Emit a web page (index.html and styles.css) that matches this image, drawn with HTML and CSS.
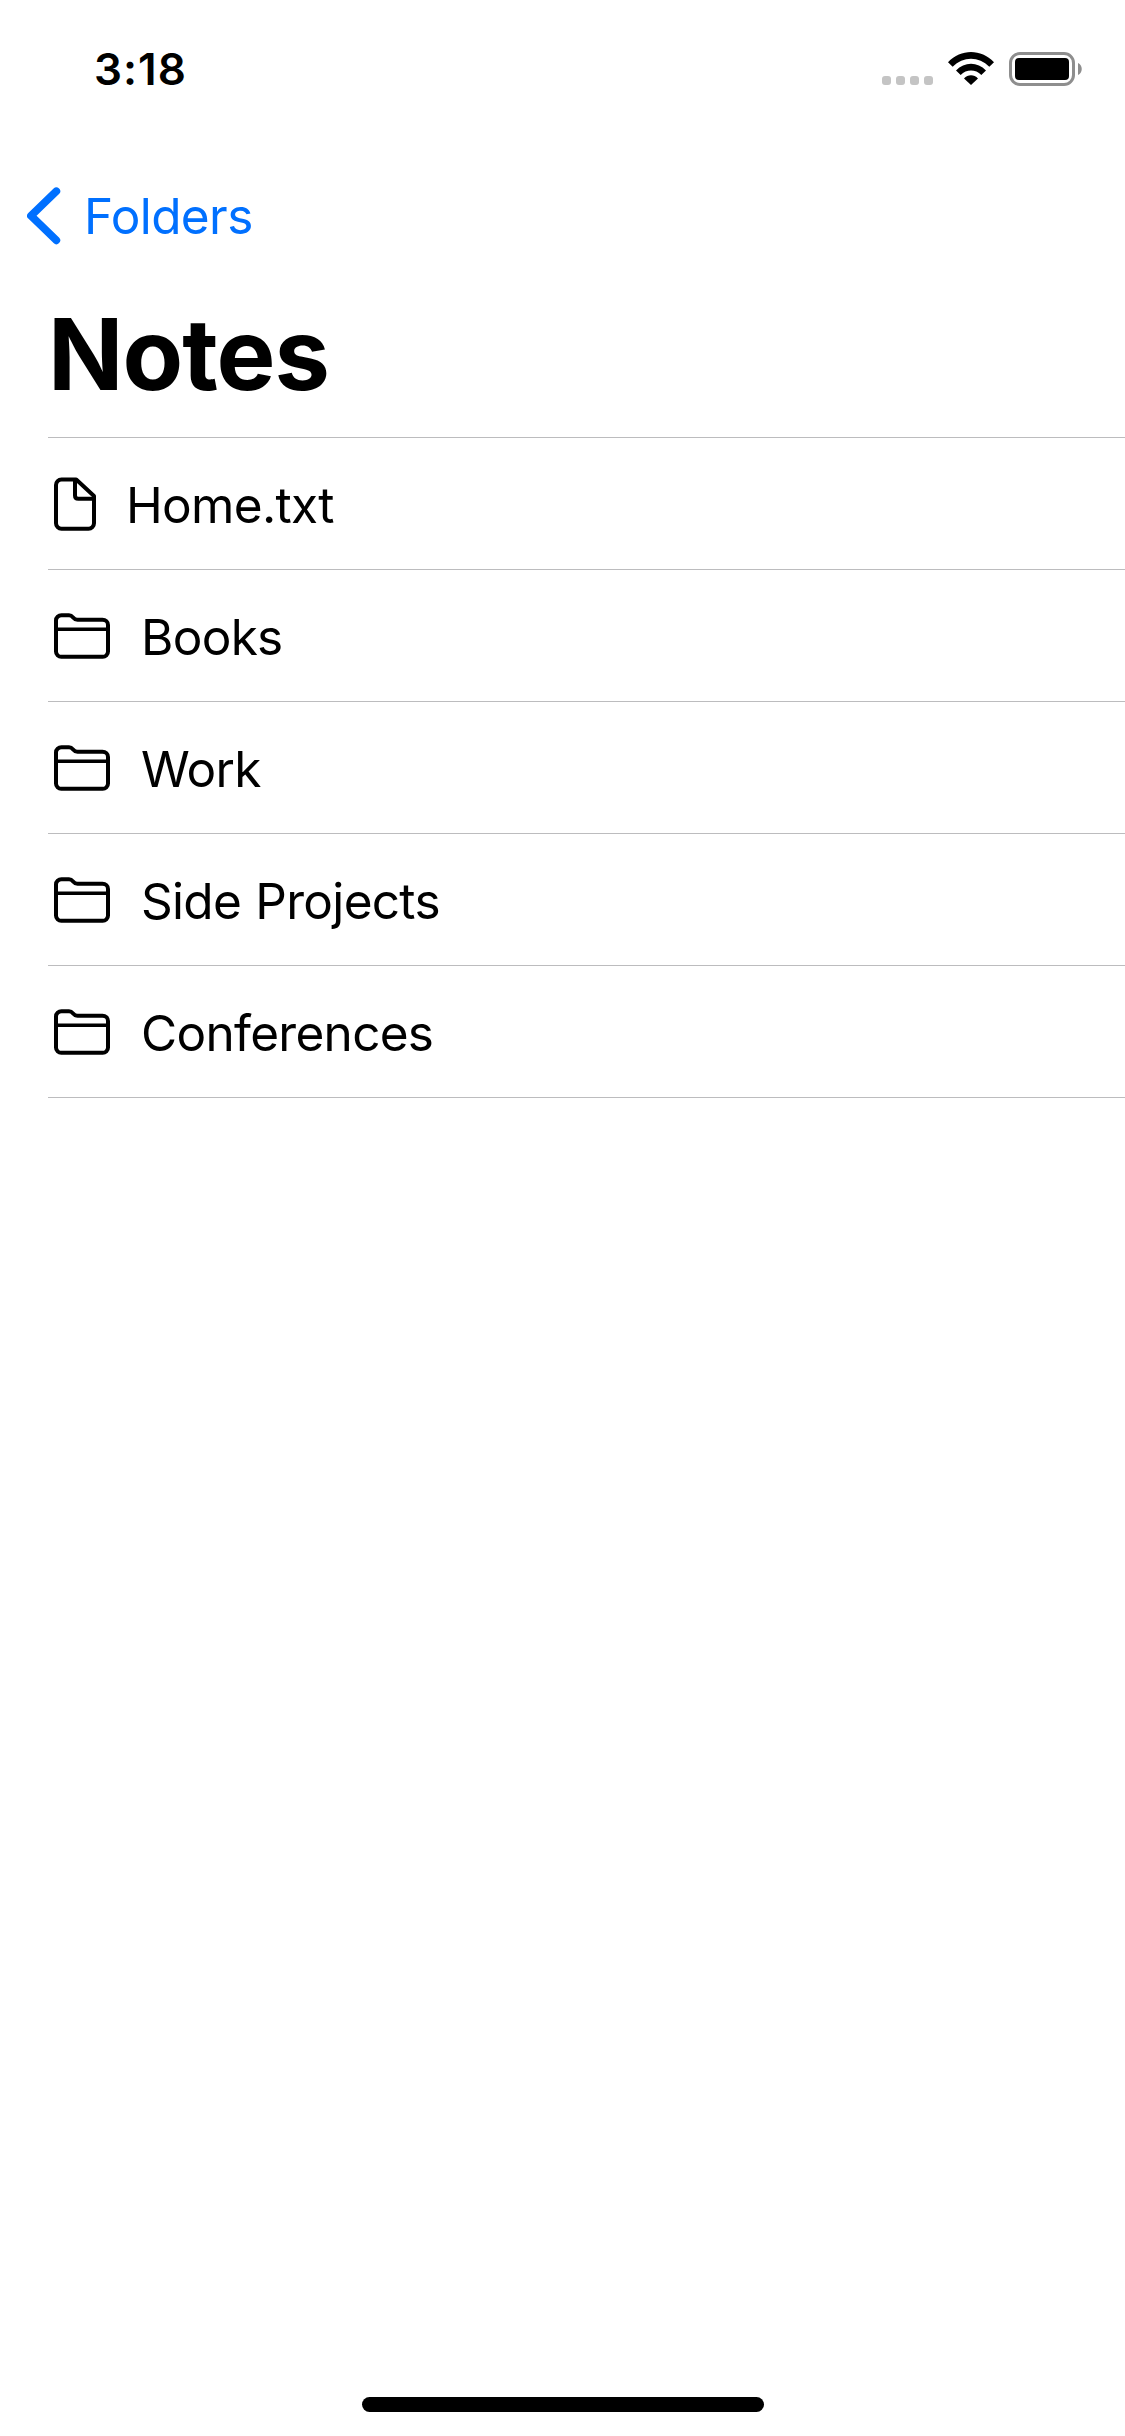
FILE: index.html
```html
<!DOCTYPE html>
<html lang="en">
<head>
<meta charset="utf-8">
<title>Notes</title>
<link rel="stylesheet" href="styles.css">
</head>
<body>
<svg class="sprite" aria-hidden="true">
  <symbol id="folder" viewBox="0 0 56 46">
    <g fill="none" stroke="currentColor" stroke-width="4">
      <path d="M2 7.5A5.5 5.2 0 0 1 7.5 2.3H15C19.6 2.3 18.6 6.8 23.5 6.8H48.5A5.5 5.2 0 0 1 54 12V38.5A5.3 5.3 0 0 1 48.5 43.8H7.5A5.3 5.3 0 0 1 2 38.5Z"/>
      <path stroke-width="3.6" d="M2 16.2H54"/>
    </g>
  </symbol>
  <symbol id="file" viewBox="0 0 42 54">
    <g fill="none" stroke="currentColor" stroke-width="4" stroke-linejoin="round">
      <path d="M2 8A5.5 5.5 0 0 1 7.5 2.5H22.2L40 19V46.3A5.5 5.5 0 0 1 34.5 51.8H7.5A5.5 5.5 0 0 1 2 46.3Z"/>
      <path d="M21 2.5V18.5Q21 21.8 24.3 21.8H40"/>
    </g>
  </symbol>
</svg>
<div class="screen">
  <header class="status">
    <span class="time">3:18</span>
    <div class="indicators">
      <div class="signal"><i></i><i></i><i></i><i></i></div>
      <svg class="wifi" viewBox="0 0 46 33">
        <path d="M0 10.3C13-3.4 33-3.4 46 10.3L41.3 14.8C31 4.1 15 4.1 4.7 14.8Z"/>
        <path d="M8 18.5C16.4 9.4 29.6 9.4 38 18.5L33.3 22.9C27.6 17.1 18.4 17.1 12.7 22.9Z"/>
        <path d="M16 26.4C20 22.2 26 22.2 30 26.4L23 33Z"/>
      </svg>
      <svg class="battery" viewBox="0 0 73 34">
        <rect x="1.5" y="1.5" width="63" height="31" rx="9.5" fill="none" stroke="#8e8e8e" stroke-width="3"/>
        <rect x="6" y="6" width="54" height="22" rx="4"/>
        <path d="M69 11C74 13 74 21 69 23Z" fill="#8e8e8e"/>
      </svg>
    </div>
  </header>
  <nav class="nav">
    <svg class="chevron" viewBox="0 0 34 58"><path d="M29.3 4.3L4 28.8L29.3 53.3"/></svg>
    <span class="back">Folders</span>
  </nav>
  <h1 class="title">Notes</h1>
  <ul class="list">
    <li class="row file"><svg class="icon-file"><use href="#file"/></svg><span>Home.txt</span></li>
    <li class="row"><svg class="icon-folder"><use href="#folder"/></svg><span>Books</span></li>
    <li class="row"><svg class="icon-folder"><use href="#folder"/></svg><span>Work</span></li>
    <li class="row"><svg class="icon-folder"><use href="#folder"/></svg><span>Side Projects</span></li>
    <li class="row"><svg class="icon-folder"><use href="#folder"/></svg><span>Conferences</span></li>
  </ul>
  <div class="home-indicator"></div>
</div>
</body>
</html>
```
FILE: styles.css
```css
* { box-sizing: border-box; }
body { margin: 0; background: #fff; color: #000; font-family: Inter, "Liberation Sans", sans-serif; }
svg { display: block; flex: none; }
.sprite { width: 0; height: 0; position: absolute; }
.screen { width: 1125px; height: 2436px; display: flex; flex-direction: column; overflow: hidden; }

.status { height: 138px; padding: 41px 43px 0 94px; display: flex; justify-content: space-between; align-items: flex-start; }
.time { font-size: 44px; font-weight: 600; line-height: 56px; letter-spacing: 1px; }
.indicators { display: flex; align-items: flex-end; padding-top: 11px; }
.signal { display: flex; gap: 5px; margin: 0 15px 1px 0; }
.signal i { width: 9px; height: 9px; border-radius: 3px; background: #c4c4c4; }
.wifi { width: 46px; height: 33px; margin: 0 15px 1px 0; }
.battery { width: 73px; height: 34px; }

.nav { height: 156px; display: flex; align-items: center; padding-left: 27px; color: #0070ff; gap: 23px; }
.chevron { width: 34px; height: 58px; }
.chevron path { fill: none; stroke: currentColor; stroke-width: 7.8; stroke-linecap: round; stroke-linejoin: round; }
.back { font-size: 49.5px; line-height: 60px; letter-spacing: -0.6px; }

.title { margin: 0; height: 143px; padding-left: 48px; font-size: 99px; font-weight: 700; line-height: 120px; letter-spacing: -1px; }

.list { list-style: none; margin: 0 0 0 48px; padding: 0; border-top: 1px solid #bcbcbe; font-size: 49.5px; }
.row { height: 132px; padding-left: 6px; border-bottom: 1px solid #bcbcbe; display: flex; align-items: center; gap: 31px; }
.row.file { gap: 30px; }
.row span { line-height: 60px; padding-top: 3px; letter-spacing: -0.7px; white-space: nowrap; word-spacing: 1px; }
.icon-file { width: 42px; height: 54px; margin-top: 1px; }
.icon-folder { width: 56px; height: 46px; margin-top: 1px; }

.home-indicator { width: 402px; height: 15px; border-radius: 7.5px; background: #000; margin: auto 0 24px 362px; }
```
